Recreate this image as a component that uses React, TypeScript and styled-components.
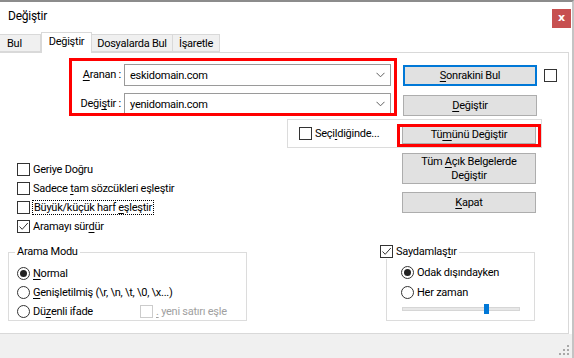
import React from "react";
import styled, { createGlobalStyle } from "styled-components";

const GlobalStyle = createGlobalStyle`
  html, body {
    margin: 0;
    padding: 0;
    background: #fff;
  }
  body {
    font-family: Roboto, "Noto Sans", sans-serif;
    font-size: 11px;
    letter-spacing: -0.25px;
    color: #000;
  }
  * {
    box-sizing: border-box;
  }
`;

const Window = styled.div`
  width: 574px;
  height: 358px;
  border-top: 2px solid #8c8c8c;
  border-right: 2px solid #c4c4c4;
  background: #fff;
  display: flex;
  flex-direction: column;
  overflow: hidden;
`;

const TitleBar = styled.div`
  height: 30px;
  display: flex;
  align-items: flex-start;
  padding-left: 8px;
`;

const Title = styled.div`
  margin-top: 6px;
  line-height: 16px;
  font-size: 12px;
`;

const CloseBtn = styled.div`
  margin-left: auto;
  margin-right: 1px;
  margin-top: 7px;
  width: 19px;
  height: 19px;
  background: #c75050;
  color: #fff;
  font-weight: bold;
  font-size: 11px;
  line-height: 17px;
  text-align: center;
  font-family: "DejaVu Sans", sans-serif;
`;

const TabStrip = styled.div`
  height: 20px;
  display: flex;
  align-items: flex-end;
  position: relative;
  z-index: 2;
`;

const Tab = styled.div<{ $active?: boolean; $w: number }>`
  width: ${(p) => p.$w}px;
  height: ${(p) => (p.$active ? 21 : 18)}px;
  margin-bottom: ${(p) => (p.$active ? -1 : 0)}px;
  background: ${(p) => (p.$active ? "#fff" : "#f0f0f0")};
  border: 1px solid #d9d9d9;
  border-bottom: ${(p) => (p.$active ? "none" : "1px solid #d9d9d9")};
  border-left: ${(p) => (p.$active ? "1px solid #d9d9d9" : "none")};
  display: flex;
  align-items: center;
  justify-content: center;
  white-space: nowrap;
  padding-bottom: ${(p) => (p.$active ? 3 : 0)}px;
  &:first-child {
    border-left: none;
    justify-content: flex-start;
    padding-left: 7px;
  }
`;

const Panel = styled.div`
  position: relative;
  height: 282px;
  margin-right: 3px;
  border: 1px solid #d9d9d9;
  border-left: none;
  display: flex;
  flex-direction: column;
`;

const Row = styled.div<{ $top: number }>`
  display: flex;
  align-items: flex-start;
  margin-top: ${(p) => p.$top}px;
`;

const FieldGrid = styled.div`
  width: 391px;
  display: grid;
  grid-template-columns: 121px 267px;
  grid-auto-rows: 22px;
  column-gap: 3px;
  row-gap: 7px;
`;

const FieldLabel = styled.div`
  text-align: right;
  line-height: 22px;
`;

const Combo = styled.div`
  height: 22px;
  border: 1px solid #9a9a9a;
  display: flex;
  align-items: center;
  padding-left: 5px;
  padding-right: 5px;
  background: #fff;
`;

const ComboText = styled.span`
  flex: 1;
`;

const ButtonCol = styled.div<{ $left: number; $top: number; $gap: number }>`
  display: flex;
  flex-direction: column;
  margin-left: ${(p) => p.$left}px;
  margin-top: ${(p) => p.$top}px;
  gap: ${(p) => p.$gap}px;
`;

const Button = styled.div<{ $h?: number; $w?: number; $default?: boolean }>`
  width: ${(p) => p.$w ?? 134}px;
  height: ${(p) => p.$h ?? 21}px;
  background: #e1e1e1;
  border: ${(p) => (p.$default ? "2px solid #0078d7" : "1px solid #adadad")};
  display: flex;
  align-items: center;
  justify-content: center;
  text-align: center;
  line-height: 14px;
`;

const Mn = styled.span`
  text-decoration: underline;
  text-underline-offset: 2px;
`;

const Box = styled.div<{ $checked?: boolean; $disabled?: boolean }>`
  width: 13px;
  height: 13px;
  flex: none;
  border: 1px solid ${(p) => (p.$disabled ? "#cccccc" : "#333")};
  background: #fff;
  display: flex;
  align-items: center;
  justify-content: center;
`;

const Radio = styled.div<{ $on?: boolean }>`
  width: 13px;
  height: 13px;
  flex: none;
  border-radius: 50%;
  border: 1px solid #333;
  background: #fff;
  display: flex;
  align-items: center;
  justify-content: center;
  &::after {
    content: "";
    display: ${(p) => (p.$on ? "block" : "none")};
    width: 7px;
    height: 7px;
    border-radius: 50%;
    background: #222;
  }
`;

const Option = styled.div<{ $h?: number; $disabled?: boolean }>`
  display: flex;
  align-items: center;
  gap: 3px;
  white-space: nowrap;
  height: ${(p) => p.$h ?? 19}px;
  color: ${(p) => (p.$disabled ? "#a0a0a0" : "#000")};
`;

const FocusText = styled.span`
  outline: 1px dotted #000;
  outline-offset: 0px;
  padding: 0 1px;
  line-height: 13px;
`;

const SelGroup = styled.div`
  margin-left: 287px;
  width: 255px;
  height: 29px;
  border: 1px solid #dcdcdc;
  display: flex;
  align-items: center;
  padding-left: 11px;
  padding-right: 5px;
`;

const PushRight = styled.div`
  margin-left: auto;
  margin-top: 2px;
`;

const OptList = styled.div`
  width: 402px;
  padding-left: 17px;
  margin-top: 12px;
  display: flex;
  flex-direction: column;
`;

const GroupBox = styled.div<{ $left: number; $w: number }>`
  position: relative;
  margin-left: ${(p) => p.$left}px;
  width: ${(p) => p.$w}px;
  height: 69px;
  border: 1px solid #dcdcdc;
`;

const Legend = styled.div<{ $left: number }>`
  position: absolute;
  top: -9px;
  left: ${(p) => p.$left}px;
  background: #fff;
  padding: 0 2px;
  line-height: 15px;
  display: flex;
  align-items: center;
  gap: 3px;
`;

const GroupBody = styled.div<{ $pl: number; $pt: number }>`
  padding-left: ${(p) => p.$pl}px;
  padding-top: ${(p) => p.$pt}px;
  display: flex;
  flex-direction: column;
`;

const SplitRow = styled.div`
  display: flex;
  align-items: center;
`;

const Fixed = styled.div<{ $w: number }>`
  width: ${(p) => p.$w}px;
`;

const Track = styled.div`
  position: relative;
  margin-top: 5px;
  margin-left: 1px;
  width: 118px;
  height: 4px;
  background: #e7e7e7;
  border: 1px solid #d6d6d6;
`;

const Thumb = styled.div`
  position: absolute;
  top: -4px;
  width: 5px;
  height: 10px;
  background: #0078d7;
`;

const Highlight = styled.div<{ $x: number; $y: number; $w: number; $h: number }>`
  position: absolute;
  left: ${(p) => p.$x}px;
  top: ${(p) => p.$y}px;
  width: ${(p) => p.$w}px;
  height: ${(p) => p.$h}px;
  border: 3px solid #ff0000;
  pointer-events: none;
`;

const StatusBar = styled.div`
  flex: 1;
  background: #f0f0f0;
  display: flex;
  justify-content: flex-end;
  align-items: flex-end;
  padding: 0 2px 2px 0;
`;

const Chevron = () => (
  <svg width="9" height="6" viewBox="0 0 9 6">
    <path d="M0.5 0.8 L4.5 4.8 L8.5 0.8" fill="none" stroke="#606060" strokeWidth="1" />
  </svg>
);

const Check = ({ on, disabled }: { on?: boolean; disabled?: boolean }) => (
  <Box $checked={on} $disabled={disabled}>
    {on && (
      <svg width="11" height="11" viewBox="0 0 11 11">
        <path d="M1.5 5.5 L4.2 8.3 L9.8 2" fill="none" stroke="#333" strokeWidth="1" />
      </svg>
    )}
  </Box>
);

const Grip = () => (
  <svg width="12" height="12" viewBox="0 0 12 12">
    {[
      [9, 1],
      [9, 5],
      [5, 5],
      [9, 9],
      [5, 9],
      [1, 9],
    ].map(([x, y]) => (
      <rect key={`${x}-${y}`} x={x} y={y} width="2" height="2" fill="#a8a8a8" />
    ))}
  </svg>
);

export default function App() {
  return (
    <>
      <GlobalStyle />
      <Window>
        <TitleBar>
          <Title>Değiştir</Title>
          <CloseBtn>x</CloseBtn>
        </TitleBar>
        <TabStrip>
          <Tab $w={41}>Bul</Tab>
          <Tab $w={51} $active>
            Değiştir
          </Tab>
          <Tab $w={81}>Dosyalarda Bul</Tab>
          <Tab $w={47}>İşaretle</Tab>
        </TabStrip>
        <Panel>
          <Row $top={11}>
            <FieldGrid>
              <FieldLabel>
                <Mn>A</Mn>ranan :
              </FieldLabel>
              <Combo>
                <ComboText>eskidomain.com</ComboText>
                <Chevron />
              </Combo>
              <FieldLabel>
                Deği<Mn>ş</Mn>tir :
              </FieldLabel>
              <Combo>
                <ComboText>yenidomain.com</ComboText>
                <Chevron />
              </Combo>
            </FieldGrid>
            <ButtonCol $left={12} $top={1} $gap={9}>
              <Button $default>
                <span>
                  <Mn>S</Mn>onrakini Bul
                </span>
              </Button>
              <Button>
                <span>
                  <Mn>D</Mn>eğiştir
                </span>
              </Button>
            </ButtonCol>
            <ButtonCol $left={7} $top={5} $gap={0}>
              <Check />
            </ButtonCol>
          </Row>

          <Row $top={3}>
            <SelGroup>
              <Option>
                <Check />
                <span>
                  Seçi<Mn>l</Mn>diğinde...
                </span>
              </Option>
              <PushRight>
                <Button $h={19}>
                  <span>
                    Tü<Mn>m</Mn>ünü Değiştir
                  </span>
                </Button>
              </PushRight>
            </SelGroup>
          </Row>

          <Row $top={0}>
            <OptList>
              <Option>
                <Check />
                <span>Geriye Doğru</span>
              </Option>
              <Option>
                <Check />
                <span>
                  Sadece <Mn>t</Mn>am sözcükleri eşleştir
                </span>
              </Option>
              <Option>
                <Check />
                <FocusText>
                  Büyük/küçük harf <Mn>e</Mn>şleştir
                </FocusText>
              </Option>
              <Option>
                <Check on />
                <span>
                  Aramayı sür<Mn>d</Mn>ür
                </span>
              </Option>
            </OptList>
            <ButtonCol $left={0} $top={5} $gap={8}>
              <Button $h={31}>
                <span>
                  Tüm <Mn>A</Mn>çık Belgelerde
                  <br />
                  Değiştir
                </span>
              </Button>
              <Button>
                <span>
                  <Mn>K</Mn>apat
                </span>
              </Button>
            </ButtonCol>
          </Row>

          <Row $top={16}>
            <GroupBox $left={8} $w={239}>
              <Legend $left={6}>Arama Modu</Legend>
              <GroupBody $pl={8} $pt={11}>
                <Option>
                  <Radio $on />
                  <span>
                    <Mn>N</Mn>ormal
                  </span>
                </Option>
                <Option>
                  <Radio />
                  <span>
                    <Mn>G</Mn>enişletilmiş (\r, \n, \t, \0, \x...)
                  </span>
                </Option>
                <SplitRow>
                  <Fixed $w={123}>
                    <Option>
                      <Radio />
                      <span>
                        Dü<Mn>z</Mn>enli ifade
                      </span>
                    </Option>
                  </Fixed>
                  <Option $disabled>
                    <Check disabled />
                    <span>
                      <Mn>.</Mn> yeni satırı eşle
                    </span>
                  </Option>
                </SplitRow>
              </GroupBody>
            </GroupBox>
            <GroupBox $left={139} $w={149}>
              <Legend $left={-9}>
                <Check on />
                <span>
                  Saydamlaş<Mn>t</Mn>ır
                </span>
              </Legend>
              <GroupBody $pl={14} $pt={9}>
                <Option $h={20}>
                  <Radio $on />
                  <span>Odak dışındayken</span>
                </Option>
                <Option $h={20}>
                  <Radio />
                  <span>Her zaman</span>
                </Option>
                <Track>
                  <Thumb style={{ left: 81 }} />
                </Track>
              </GroupBody>
            </GroupBox>
          </Row>

          <Highlight $x={69} $y={5} $w={328} $h={58} />
          <Highlight $x={397} $y={71} $w={144} $h={23} />
        </Panel>
        <StatusBar>
          <Grip />
        </StatusBar>
      </Window>
    </>
  );
}
